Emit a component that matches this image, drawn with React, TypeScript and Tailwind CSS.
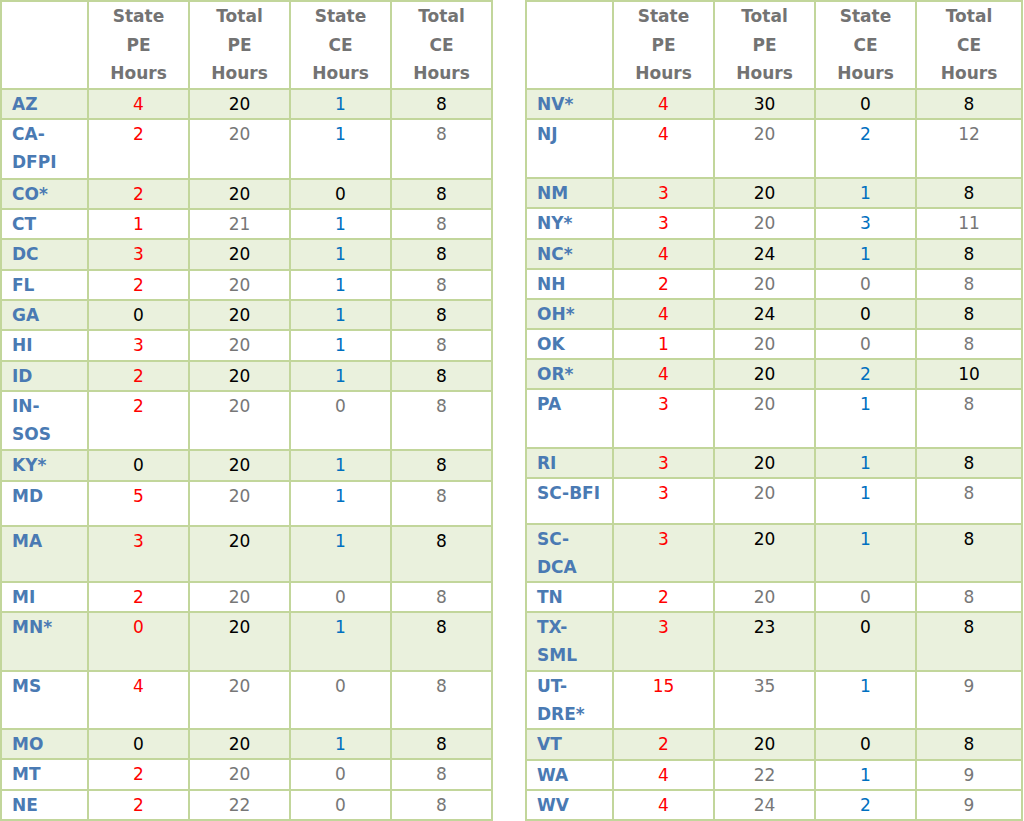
type Row = {
    name: string[];
    pe: string;
    totalPe: string;
    ce: string;
    totalCe: string;
    h: string;
    shaded: boolean;
    peBlack?: boolean;
};

const r = (
    name: string,
    pe: string,
    totalPe: string,
    ce: string,
    totalCe: string,
    shaded: boolean,
    h = "h-[29px]",
    peBlack = false
): Row => ({ name: name.split("|"), pe, totalPe, ce, totalCe, shaded, h, peBlack });

const leftRows: Row[] = [
    r("AZ", "4", "20", "1", "8", true),
    r("CA-|DFPI", "2", "20", "1", "8", false, "h-[59px]"),
    r("CO*", "2", "20", "0", "8", true),
    r("CT", "1", "21", "1", "8", false),
    r("DC", "3", "20", "1", "8", true),
    r("FL", "2", "20", "1", "8", false),
    r("GA", "0", "20", "1", "8", true, "h-[29px]", true),
    r("HI", "3", "20", "1", "8", false),
    r("ID", "2", "20", "1", "8", true),
    r("IN-|SOS", "2", "20", "0", "8", false, "h-[59px]"),
    r("KY*", "0", "20", "1", "8", true, "h-[29px]", true),
    r("MD", "5", "20", "1", "8", false, "h-[45px]"),
    r("MA", "3", "20", "1", "8", true, "h-[55px]"),
    r("MI", "2", "20", "0", "8", false),
    r("MN*", "0", "20", "1", "8", true, "h-[59px]"),
    r("MS", "4", "20", "0", "8", false, "h-[57px]"),
    r("MO", "0", "20", "1", "8", true, "h-[29px]", true),
    r("MT", "2", "20", "0", "8", false),
    r("NE", "2", "22", "0", "8", false),
];

const rightRows: Row[] = [
    r("NV*", "4", "30", "0", "8", true),
    r("NJ", "4", "20", "2", "12", false, "h-[59px]"),
    r("NM", "3", "20", "1", "8", true),
    r("NY*", "3", "20", "3", "11", false),
    r("NC*", "4", "24", "1", "8", true),
    r("NH", "2", "20", "0", "8", false),
    r("OH*", "4", "24", "0", "8", true),
    r("OK", "1", "20", "0", "8", false),
    r("OR*", "4", "20", "2", "10", true),
    r("PA", "3", "20", "1", "8", false, "h-[59px]"),
    r("RI", "3", "20", "1", "8", true),
    r("SC-BFI", "3", "20", "1", "8", false, "h-[45px]"),
    r("SC-|DCA", "3", "20", "1", "8", true, "h-[55px]"),
    r("TN", "2", "20", "0", "8", false),
    r("TX-|SML", "3", "23", "0", "8", true, "h-[59px]"),
    r("UT-|DRE*", "15", "35", "1", "9", false, "h-[57px]"),
    r("VT", "2", "20", "0", "8", true),
    r("WA", "4", "22", "1", "9", false),
    r("WV", "4", "24", "2", "9", false),
];

const cell = "border-2 border-[#c2d69b] align-top text-center p-0";

function HoursTable({ rows, lastCol }: { rows: Row[]; lastCol: string }) {
    return (
        <table className="border-collapse table-fixed">
            <colgroup>
                <col className="w-[87px]" />
                <col className="w-[101px]" />
                <col className="w-[101px]" />
                <col className="w-[101px]" />
                <col className={lastCol} />
            </colgroup>
            <thead>
                <tr className="h-[88px]">
                    <th className={cell}></th>
                    {["State|PE|Hours", "Total|PE|Hours", "State|CE|Hours", "Total|CE|Hours"].map((t) => (
                        <th key={t} className={`${cell} font-bold text-[#737373] leading-[28.5px]`}>
                            {t.split("|").map((w) => (
                                <div key={w}>{w}</div>
                            ))}
                        </th>
                    ))}
                </tr>
            </thead>
            <tbody>
                {rows.map((row) => {
                    const plain = row.shaded ? "text-black" : "text-[#777777]";
                    return (
                        <tr key={row.name.join("")} className={`${row.h} ${row.shaded ? "bg-[#eaf1dd]" : "bg-white"}`}>
                            <td className={`${cell} text-left pl-[10px] font-bold text-[#4a7ab3] whitespace-nowrap`}>
                                {row.name.map((n) => (
                                    <div key={n}>{n}</div>
                                ))}
                            </td>
                            <td className={`${cell} ${row.peBlack ? "text-black" : "text-[#ff0000]"}`}>{row.pe}</td>
                            <td className={`${cell} ${plain}`}>{row.totalPe}</td>
                            <td className={`${cell} ${row.ce === "0" ? plain : "text-[#0070c0]"}`}>{row.ce}</td>
                            <td className={`${cell} ${plain}`}>{row.totalCe}</td>
                        </tr>
                    );
                })}
            </tbody>
        </table>
    );
}

export default function App() {
    return (
        <div className="w-[1024px] h-[821px] bg-white flex gap-[32px] font-['DejaVu_Sans',sans-serif] text-[17px] leading-[28px] overflow-hidden">
            <HoursTable rows={leftRows} lastCol="w-[101px]" />
            <HoursTable rows={rightRows} lastCol="w-[106px]" />
        </div>
    );
}
